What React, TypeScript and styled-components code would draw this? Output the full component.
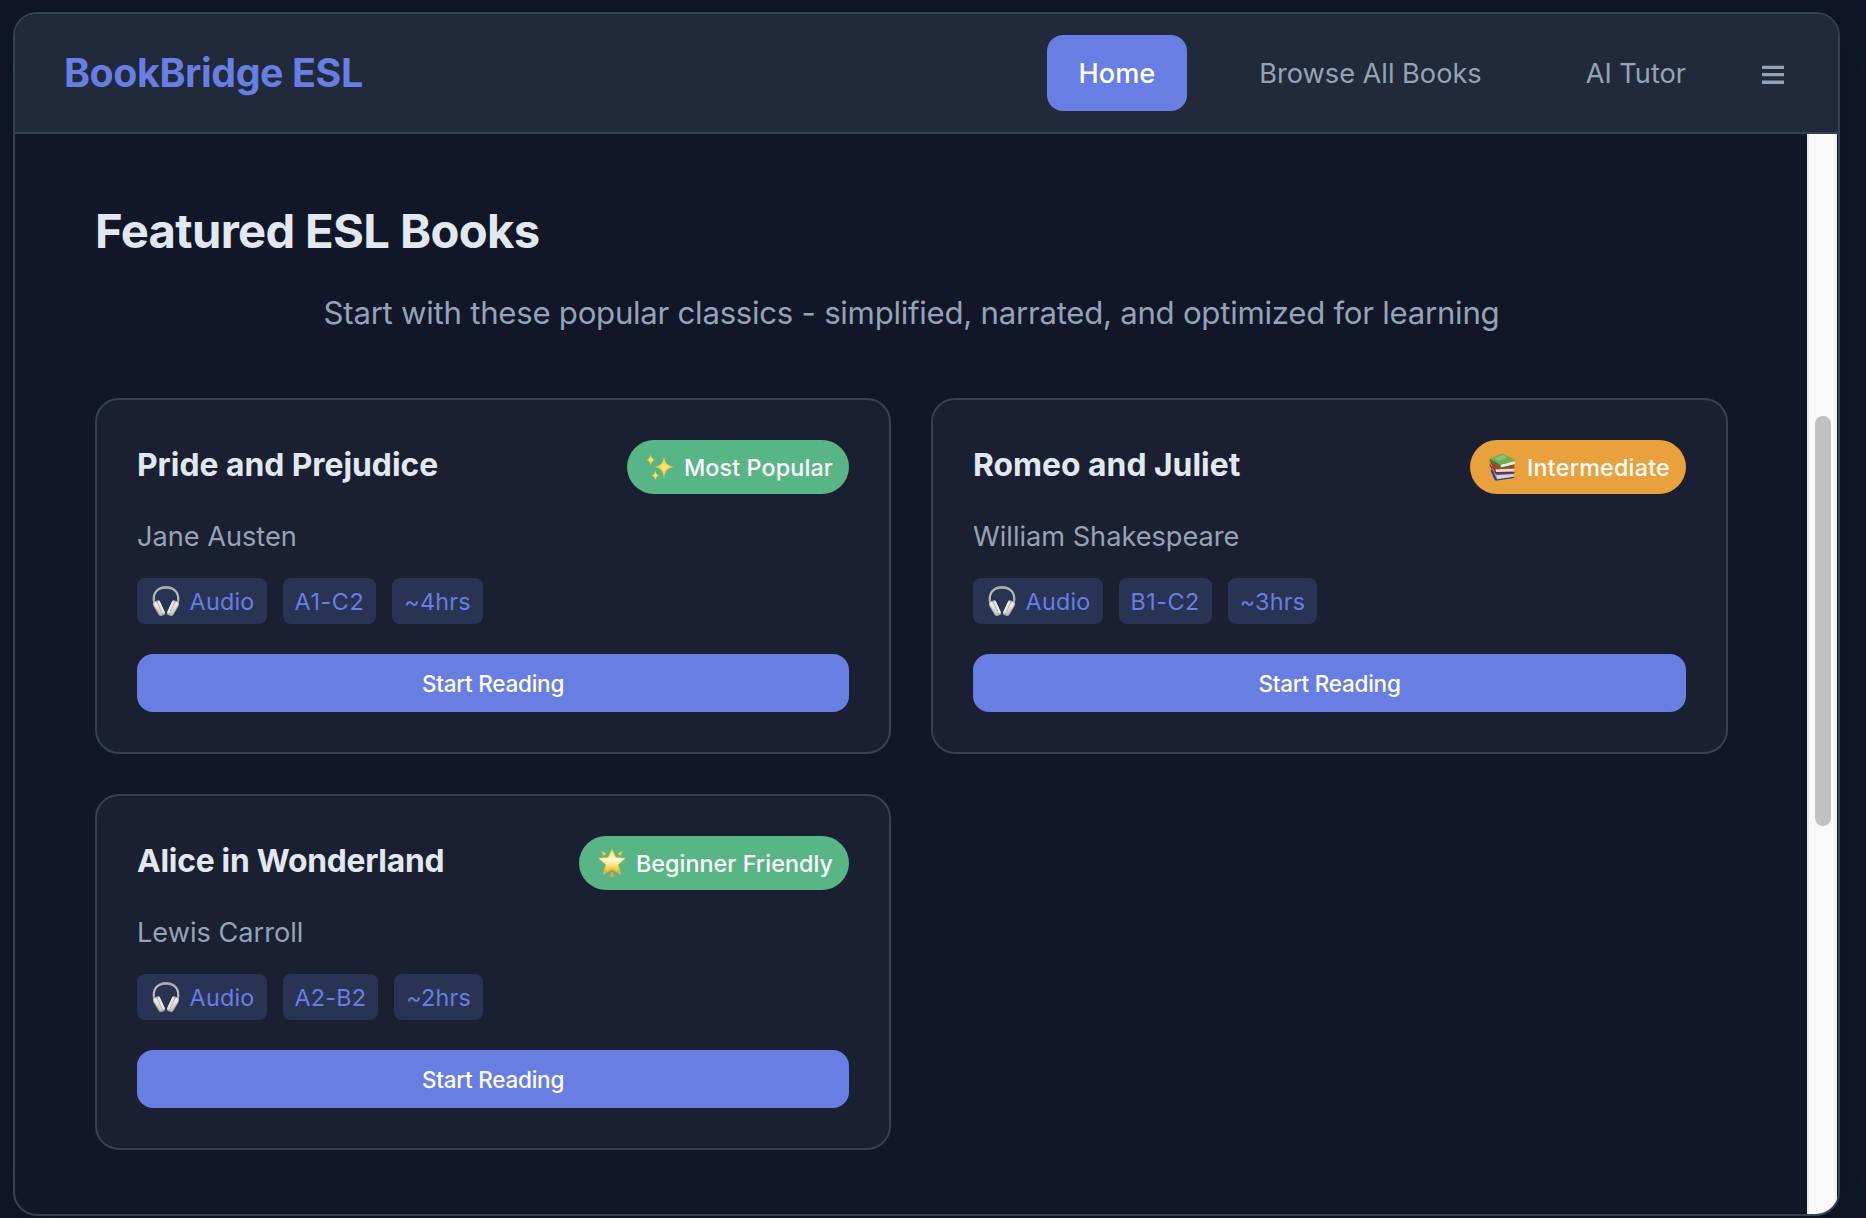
import React from "react";
import styled, { createGlobalStyle } from "styled-components";

const GlobalStyle = createGlobalStyle`
  *, *::before, *::after { box-sizing: border-box; }
  body {
    margin: 0;
    overflow: hidden;
    background: #11162a;
    color: #e2e8f0;
    font-family: Inter, "Noto Sans", sans-serif;
  }
  h1, h2, h3, p { margin: 0; }
  button { border: 0; padding: 0; font-family: inherit; }
`;

const Page = styled.div`
  height: 1218px;
  padding: 12px 26px 2px 13px;
  display: flex;
`;

const Window = styled.div`
  flex: 1;
  display: flex;
  flex-direction: column;
  border: 2px solid #374151;
  border-radius: 24px;
  overflow: hidden;
  background: #111628;
  box-shadow: 0 8px 40px rgba(13, 20, 26, 0.75);
`;

const Header = styled.header`
  height: 120px;
  padding: 0 48px 0 49px;
  display: flex;
  align-items: center;
  justify-content: space-between;
  background: #212a3a;
  border-bottom: 2px solid #374151;
`;

const Logo = styled.h1`
  font-size: 39.3px;
  line-height: 48px;
  padding-bottom: 1px;
  font-weight: 700;
  letter-spacing: -0.38px;
  color: #687ee3;
`;

const Nav = styled.nav`
  display: flex;
  align-items: center;
  gap: 40px;
`;

const NavItem = styled.a<{ $active?: boolean }>`
  height: 76px;
  padding: 0 32px;
  display: flex;
  align-items: center;
  border-radius: 16px;
  font-size: 27.2px;
  letter-spacing: -0.02px;
  font-weight: ${(p) => (p.$active ? 500 : 400)};
  color: ${(p) => (p.$active ? "#ffffff" : "#94a3b8")};
  background: ${(p) => (p.$active ? "#687ee3" : "transparent")};
`;

const MenuButton = styled.button`
  display: flex;
  background: transparent;
  color: #94a3b8;
`;

const Body = styled.div`
  flex: 1;
  display: flex;
  padding-right: 1px;
`;

const Content = styled.main`
  flex: 1;
  padding: 69px 79px 0 80px;
`;

const Heading = styled.h2`
  font-size: 47.2px;
  line-height: 56px;
  font-weight: 700;
  letter-spacing: -0.66px;
`;

const Subtitle = styled.p`
  margin-top: 35px;
  font-size: 31.2px;
  line-height: 39px;
  letter-spacing: -0.27px;
  text-align: center;
  color: #94a3b8;
`;

const Grid = styled.div`
  margin-top: 65px;
  display: grid;
  grid-template-columns: 796px 797px;
  gap: 40px;
`;

const Card = styled.article`
  height: 356px;
  padding: 40px;
  display: flex;
  flex-direction: column;
  background: #1a2031;
  border: 2px solid #374151;
  border-radius: 24px;
`;

const CardTop = styled.div`
  display: flex;
  align-items: flex-start;
  justify-content: space-between;
`;

const Title = styled.h3<{ $tracking: number }>`
  font-size: 31.8px;
  line-height: 50px;
  font-weight: 700;
  letter-spacing: ${(p) => p.$tracking}px;
`;

const Badge = styled.span<{ $tone: "green" | "orange"; $tracking: number }>`
  height: 54px;
  padding: 0 16px;
  display: flex;
  align-items: center;
  gap: 7px;
  border-radius: 27px;
  font-size: 23.3px;
  font-weight: 500;
  letter-spacing: ${(p) => p.$tracking}px;
  color: #ffffff;
  background: ${(p) => (p.$tone === "green" ? "#58b586" : "#e8a13c")};
`;

const Author = styled.p`
  margin-top: 26px;
  font-size: 27.2px;
  line-height: 34px;
  letter-spacing: -0.02px;
  color: #94a3b8;
`;

const Chips = styled.div`
  margin-top: 24px;
  display: flex;
  gap: 16px;
`;

const Chip = styled.span<{ $tracking?: number }>`
  height: 46px;
  padding: 0 12px;
  display: flex;
  align-items: center;
  gap: 6.6px;
  border-radius: 8px;
  font-size: 23.3px;
  letter-spacing: ${(p) => p.$tracking ?? 0.24}px;
  color: #687ee3;
  background: #293353;
`;

const ReadButton = styled.button`
  height: 58px;
  margin-top: 30px;
  padding-top: 1px;
  border-radius: 16px;
  font-size: 22.5px;
  font-weight: 500;
  letter-spacing: -0.24px;
  color: #ffffff;
  background: #687ee3;
`;

const Scrollbar = styled.div`
  width: 30px;
  padding: 282px 6px 0;
  background: #fafafa;
  border-left: 2px solid #e8e8e8;
  border-right: 2px solid #f0f0f0;
`;

const Thumb = styled.div`
  width: 16px;
  height: 410px;
  border-radius: 8px;
  background: #c1c1c1;
`;

const Glyph = styled.svg`
  width: 34px;
  height: 30px;
  flex: none;
`;

function Headphones() {
  return (
    <Glyph viewBox="0 0 34 30" fill="none">
      <defs>
        <linearGradient id="cup" x1="0" y1="0" x2="0" y2="1">
          <stop offset="0" stopColor="#f4f4f2" />
          <stop offset="1" stopColor="#c4c4c2" />
        </linearGradient>
      </defs>
      <path d="M5.400 17C2.600 7.400 8.600 1.200 17 1.200S31.400 7.400 28.600 17" stroke="#aaa9a7" strokeWidth="2.3" />
      <path d="M5 14C4.200 6.400 9.400 2.200 17 2.200S29.800 6.400 29 14" stroke="#d0cfcd" strokeWidth="0.7" />
      <path fill="#a9a9a7" d="M4.500 15.500 10 14l6 12.500c.5 1.500-.3 2.300-1.500 2.700l-2.500.7c-1 .2-1.800-.3-2.400-1.200L4.600 20.400c-.8-1.700-1-3.500-.1-4.900Z" />
      <path fill="#a9a9a7" d="M29.500 15.500 24 14l-6 12.500c-.5 1.500.3 2.300 1.500 2.700l2.500.7c1 .2 1.800-.3 2.400-1.200l5-8.300c.8-1.700 1-3.500.1-4.900Z" />
      <path fill="url(#cup)" d="M5 17c1-1.500 2.400-1.500 3.200.2l5 10.100c.4 1.300-1.700 2.200-2.700.8L5.300 19.700C4.800 18.700 4.600 17.800 5 17ZM29 17c-1-1.500-2.400-1.500-3.200.2l-5 10.100c-.4 1.300 1.700 2.200 2.700.8l5.200-8.400c.5-1 .7-1.900.3-2.700Z" />
      <path d="M9.900 16 14.600 26.200M24.100 16 19.400 26.200" stroke="#e9e9e6" strokeWidth="2.4" strokeLinecap="round" />
    </Glyph>
  );
}

function Sparkles() {
  return (
    <Glyph viewBox="0 0 34 30">
      <defs>
        <radialGradient id="spark">
          <stop offset="0" stopColor="#ffe56a" />
          <stop offset="0.45" stopColor="#fbd54f" />
          <stop offset="1" stopColor="#d9a441" />
        </radialGradient>
      </defs>
      <path fill="url(#spark)" d="M21 2.400c.8 8.600 2 11.200 11 12.600-9 1.400-10.200 4-11 12.600-.8-8.600-2-11.200-10.500-12.600C19 13.600 20.200 11 21 2.400Z" />
      <path fill="url(#spark)" d="M7.700 1.600c.5 4 1.400 5.500 4.500 6.400-3.100.9-4 2.400-4.500 6.400-.5-4-1.400-5.500-4.500-6.400 3.100-.9 4-2.400 4.500-6.400Z" />
      <path fill="url(#spark)" d="M12.400 18c.5 3.300 1.200 4.700 4 5.500-2.800.8-3.500 2.200-4 5.500-.5-3.300-1.200-4.700-4-5.500 2.800-.8 3.500-2.200 4-5.500Z" />
    </Glyph>
  );
}

function Books() {
  return (
    <Glyph viewBox="0 0 34 30">
      <path fill="#2f4290" d="M4.600 18.500 6 17l5 10 17-2.500V26l-17 2.600c-1.500.2-2.600-.6-3-2Z" />
      <path fill="#d9d3cf" d="m10.500 22.600 17-1.200.5 3-17 2.800Z" />
      <path fill="#39509f" d="m6 18 4.500 5 17.400-1-.4-2.400-17 .600Z" />
      <path fill="#8d2320" d="m4 12.500 6 8.500h18.500v-1.600L10 18Z" />
      <path fill="#e6deda" d="m9.500 17.600 19-.9v2.700l-18.500.500Z" />
      <path fill="#c8302a" d="m4 10.300 4 6.900 20.500-.6-.6-4.600-13-3Z" />
      <path fill="#27408f" d="M3.600 11.200 5.800 15l1 3.600-3-4.600Z" />
      <path fill="#3f7d36" d="M4 6.700c-.8.800-.5 2 .3 2.800l9.500 7 1.200-.2V13Z" />
      <path fill="#eeeae5" d="m14.500 12.600 14.800-3.100-.8 2.900L15 15.700Z" />
      <path fill="#3f7d36" d="m14 15.800 14.700-3.500.2.700-14 3.900Z" />
      <path fill="#6fae55" d="M4 6.600 16.500 1.200 29.800 8.500l-15.500 4.200Z" />
      <path fill="#8bc270" d="m8 6.400 8.600-3.700 5 2.700-8.800 3.300Z" />
    </Glyph>
  );
}

function GlowingStar() {
  return (
    <Glyph viewBox="0 0 34 30">
      <defs>
        <linearGradient id="star" x1="0" y1="0" x2="0" y2="1">
          <stop offset="0" stopColor="#fce46a" />
          <stop offset="0.45" stopColor="#fffbd0" />
          <stop offset="0.7" stopColor="#fbdc55" />
          <stop offset="1" stopColor="#e39a35" />
        </linearGradient>
      </defs>
      <path
        fill="url(#star)"
        stroke="#ecb344"
        strokeWidth="0.7"
        strokeLinejoin="round"
        d="m17 1.200 3.700 8 9.800 1-7.200 6.500 2.500 9.600-8.800-4.900-8.800 4.900 2.500-9.600-7.200-6.500 9.800-1Z"
      />
      <path fill="#f0c94c" d="M6.400 3 10 4.600c1 .6 1 2-.1 2.600l-1.600.6ZM27.600 3 24 4.600c-1 .6-1 2 .1 2.600l1.600.6Z" />
      <path fill="#e2a03b" d="M17 23.500c1.300.5 2 2.700 2.200 5.300-1.500.7-2.900.7-4.400 0 .2-2.600.9-4.800 2.200-5.300Z" />
    </Glyph>
  );
}

type Book = {
  title: string;
  tracking: number;
  author: string;
  tone: "green" | "orange";
  badge: string;
  badgeTracking: number;
  icon: React.ReactNode;
  level: string;
  levelTracking: number;
  duration: string;
};

const books: Book[] = [
  { title: "Pride and Prejudice", tracking: 0, author: "Jane Austen", tone: "green", badge: "Most Popular", badgeTracking: 0.14, icon: <Sparkles />, level: "A1-C2", levelTracking: 0.62, duration: "~4hrs" },
  { title: "Romeo and Juliet", tracking: 0.02, author: "William Shakespeare", tone: "orange", badge: "Intermediate", badgeTracking: 0.22, icon: <Books />, level: "B1-C2", levelTracking: 0.5, duration: "~3hrs" },
  { title: "Alice in Wonderland", tracking: -0.26, author: "Lewis Carroll", tone: "green", badge: "Beginner Friendly", badgeTracking: 0.06, icon: <GlowingStar />, level: "A2-B2", levelTracking: 0.25, duration: "~2hrs" },
];

function BookCard({ book }: { book: Book }) {
  return (
    <Card>
      <CardTop>
        <Title $tracking={book.tracking}>{book.title}</Title>
        <Badge $tone={book.tone} $tracking={book.badgeTracking}>
          {book.icon}
          {book.badge}
        </Badge>
      </CardTop>
      <Author>{book.author}</Author>
      <Chips>
        <Chip>
          <Headphones />
          Audio
        </Chip>
        <Chip $tracking={book.levelTracking}>{book.level}</Chip>
        <Chip>{book.duration}</Chip>
      </Chips>
      <ReadButton>Start Reading</ReadButton>
    </Card>
  );
}

export default function App() {
  return (
    <>
      <GlobalStyle />
      <Page>
        <Window>
          <Header>
            <Logo>BookBridge ESL</Logo>
            <Nav>
              <NavItem $active>Home</NavItem>
              <NavItem>Browse All Books</NavItem>
              <NavItem>AI Tutor</NavItem>
              <MenuButton aria-label="Menu">
                <svg width="32" height="32" viewBox="0 0 32 32" fill="currentColor">
                  <path d="M4 8.700h22v3.300H4zM4 16.100h22v3.200H4zM4 23.600h22v3.300H4z" />
                </svg>
              </MenuButton>
            </Nav>
          </Header>
          <Body>
            <Content>
              <Heading>Featured ESL Books</Heading>
              <Subtitle>
                Start with these popular classics - simplified, narrated, and optimized for learning
              </Subtitle>
              <Grid>
                {books.map((book) => (
                  <BookCard key={book.title} book={book} />
                ))}
              </Grid>
            </Content>
            <Scrollbar>
              <Thumb />
            </Scrollbar>
          </Body>
        </Window>
      </Page>
    </>
  );
}
